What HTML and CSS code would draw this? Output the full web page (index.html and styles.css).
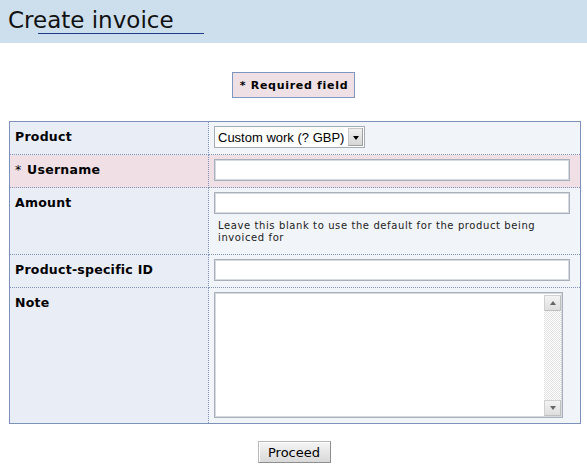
FILE: index.html
```html
<!DOCTYPE html>
<html lang="en">
<head>
<meta charset="utf-8">
<title>Create invoice</title>
<link rel="stylesheet" href="styles.css">
</head>
<body>
<header class="page-head">
  <h1 class="title">Create invoice</h1>
  <div class="title-rule"></div>
</header>
<main class="content">
  <div class="notice-wrap"><span class="notice">* Required field</span></div>
  <form class="form">
    <table class="fields">
      <tr class="row">
        <th class="label">Product</th>
        <td class="field"><span class="select-wrap"><select class="select"><option>Custom work (? GBP)</option></select></span></td>
      </tr>
      <tr class="row required">
        <th class="label"><span class="star">*</span> Username</th>
        <td class="field"><input class="text" type="text"></td>
      </tr>
      <tr class="row">
        <th class="label">Amount</th>
        <td class="field"><input class="text" type="text"><p class="help">Leave this blank to use the default for the product being invoiced for</p></td>
      </tr>
      <tr class="row">
        <th class="label">Product-specific ID</th>
        <td class="field"><input class="text" type="text"></td>
      </tr>
      <tr class="row last">
        <th class="label">Note</th>
        <td class="field">
          <div class="note-box">
            <textarea class="note"></textarea>
            <div class="scrollbar" aria-hidden="true">
              <span class="sb-btn sb-up"></span>
              <span class="sb-track"></span>
              <span class="sb-btn sb-down"></span>
            </div>
          </div>
        </td>
      </tr>
    </table>
    <div class="actions"><button class="btn" type="button">Proceed</button></div>
  </form>
</main>
</body>
</html>
```

FILE: styles.css
```css
html, body {
  margin: 0;
  padding: 0;
  background: #ffffff;
}
body {
  font-family: "DejaVu Sans", Verdana, sans-serif;
  color: #000;
}
.page-head {
  background: #cddfec;
  height: 43px;
  box-sizing: border-box;
  padding-top: 8px;
}
.title {
  margin: 0 0 0 8px;
  font-size: 23px;
  font-weight: normal;
  line-height: 25px;
  color: #111;
}
.title-rule {
  margin-left: 38px;
  width: 166px;
  border-top: 1px solid #1c3b8a;
}
.notice-wrap {
  display: flex;
  justify-content: center;
  margin-top: 29px;
}
.notice {
  display: block;
  background: #efe0e6;
  border: 1px solid #7d97bf;
  font-size: 11px;
  font-weight: bold;
  letter-spacing: 0.7px;
  line-height: 13px;
  padding: 6px 6px 5px 7px;
}
.fields {
  margin: 23px 0 0 9px;
  width: 572px;
  border-collapse: separate;
  border-spacing: 0;
  border: 1px solid #7d92bb;
}
.label {
  width: 188px;
  padding: 7px 5px 0 5px;
  text-align: left;
  vertical-align: top;
  font-size: 12.5px;
  letter-spacing: 0.25px;
  line-height: 15px;
  font-weight: bold;
  background: #e9edf5;
  border-right: 1px dotted #7f93bd;
  border-bottom: 1px dotted #7f93bd;
}
.star {
  font-weight: normal;
  margin-right: 1px;
}
.field {
  padding: 4px 5px 6px 5px;
  vertical-align: top;
  background: #f1f4f9;
  border-bottom: 1px dotted #7f93bd;
}
.last .label, .last .field {
  border-bottom: none;
}
.last .field {
  padding-bottom: 5px;
}
.required .label, .required .field {
  background: #f0e0e5;
}
.text {
  display: block;
  width: 356px;
  height: 22px;
  box-sizing: border-box;
  margin: 0;
  border: 1px solid #a8b0bc;
  box-shadow: inset 0 0 0 1px #d6dbe2;
  background: #fff;
  outline: none;
}
.help {
  width: 356px;
  margin: 6px 0 4px 4px;
  font-size: 10px;
  letter-spacing: 0.6px;
  line-height: 12px;
  color: #222;
}
.select-wrap {
  display: flex;
  position: relative;
  width: 151px;
}
.select {
  -webkit-appearance: none;
  appearance: none;
  width: 151px;
  height: 22px;
  box-sizing: border-box;
  margin: 0;
  padding: 0 18px 0 3px;
  border: 1px solid #a5acb5;
  border-radius: 0;
  background: #fff;
  font-family: "Liberation Sans", Arial, sans-serif;
  font-size: 13px;
  color: #000;
}
.select-wrap::after {
  content: "";
  position: absolute;
  right: 2px;
  top: 2px;
  bottom: 2px;
  width: 15px;
  background: linear-gradient(#f0f0f0, #d6d6d6);
  border: 1px solid #a0a0a0;
  border-top-color: #c8c8c8;
  border-left-color: #c8c8c8;
  box-sizing: border-box;
}
.select-wrap::before {
  content: "";
  position: absolute;
  z-index: 1;
  right: 6px;
  top: 10px;
  width: 0;
  height: 0;
  border-left: 3.5px solid transparent;
  border-right: 3.5px solid transparent;
  border-top: 4px solid #000;
  pointer-events: none;
}
.note-box {
  display: flex;
  width: 349px;
  height: 126px;
  box-sizing: border-box;
  padding: 2px 1px 1px 1px;
  border: 1px solid #a8b0bc;
  box-shadow: inset 0 0 0 1px #d6dbe2;
  background: #fff;
}
.note {
  flex: 1;
  min-width: 0;
  margin: 0;
  padding: 1px;
  border: none;
  background: transparent;
  resize: none;
  overflow: hidden;
  outline: none;
}
.scrollbar {
  display: flex;
  flex-direction: column;
  width: 17px;
}
.sb-btn {
  display: flex;
  align-items: center;
  justify-content: center;
  height: 16px;
  box-sizing: border-box;
  border: 1px solid #d0d0d0;
  border-right-color: #c0c0c0;
  border-bottom-color: #c0c0c0;
  background: linear-gradient(#f3f3f3, #dedede);
}
.sb-up::before, .sb-down::before {
  content: "";
  width: 0;
  height: 0;
  border-left: 3.5px solid transparent;
  border-right: 3.5px solid transparent;
}
.sb-up::before {
  border-bottom: 4px solid #666;
}
.sb-down::before {
  border-top: 4px solid #666;
}
.sb-track {
  flex: 1;
  background: repeating-conic-gradient(#e2e2e2 0 25%, #ffffff 0 50%) 0 0 / 2px 2px;
}
.actions {
  display: flex;
  justify-content: center;
  margin-top: 17px;
}
.btn {
  width: 73px;
  height: 22px;
  margin: 0 0 0 1px;
  padding: 0;
  box-sizing: border-box;
  font-family: "DejaVu Sans", Verdana, sans-serif;
  font-size: 13px;
  color: #000;
  background: linear-gradient(#f5f5f5, #d8d8d8);
  border: 1px solid #8f8f8f;
  border-top-color: #b8b8b8;
  border-left-color: #b8b8b8;
  box-shadow: inset 1px 1px #ffffff;
  border-radius: 0;
}
```
